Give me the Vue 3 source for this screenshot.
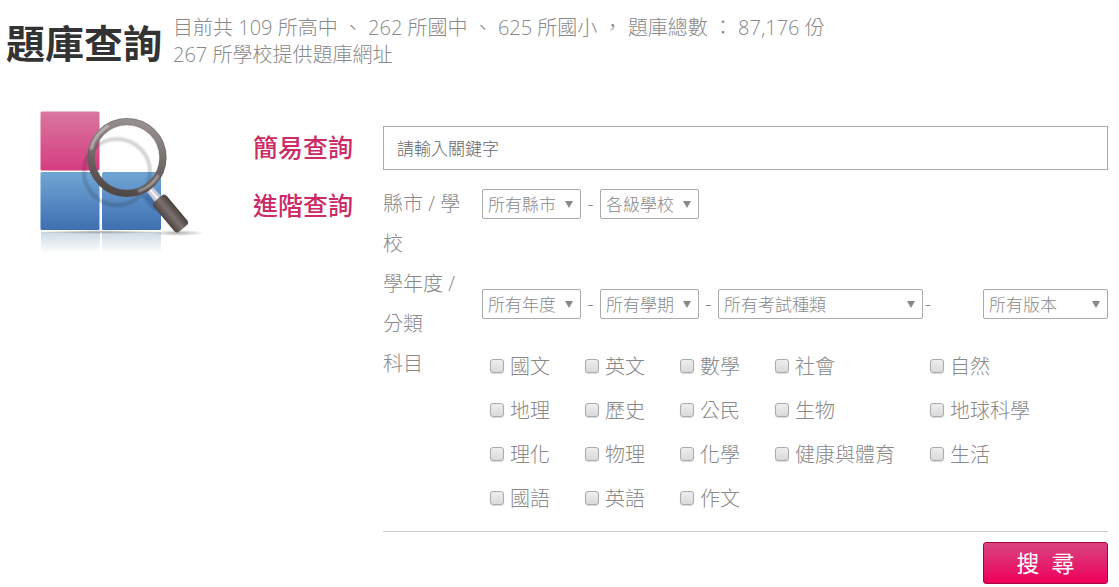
<template>
  <div class="view" lang="zh-Hant">
    <header class="head">
      <h1>題庫查詢</h1>
      <p>
        目前共 109 所高中 、 262 所國中 、 625 所國小 ， 題庫總數 ： 87,176 份<br />
        267 所學校提供題庫網址
      </p>
    </header>

    <form class="search" @submit.prevent="submit">
      <svg class="logo" viewBox="36 105 170 150" width="170" height="150" aria-hidden="true">
        <defs>
          <linearGradient id="pink" x1="0" y1="0" x2="0" y2="1">
            <stop offset="0" stop-color="#d9779f" />
            <stop offset="1" stop-color="#d53c80" />
          </linearGradient>
          <linearGradient id="blue" x1="0" y1="0" x2="0" y2="1">
            <stop offset="0" stop-color="#70a6d5" />
            <stop offset="1" stop-color="#3e6fb1" />
          </linearGradient>
          <linearGradient id="mirror" x1="0" y1="0" x2="0" y2="1">
            <stop offset="0" stop-color="#cbd9e3" />
            <stop offset="1" stop-color="#fff" />
          </linearGradient>
          <linearGradient id="ring" x1="0.6" y1="0" x2="0.4" y2="1">
            <stop offset="0" stop-color="#979090" />
            <stop offset="0.5" stop-color="#736a69" />
            <stop offset="1" stop-color="#514845" />
          </linearGradient>
          <linearGradient id="handle" x1="0" y1="0" x2="1" y2="0">
            <stop offset="0" stop-color="#4c4340" />
            <stop offset="0.5" stop-color="#7b7170" />
            <stop offset="1" stop-color="#483f3c" />
          </linearGradient>
          <radialGradient id="ground">
            <stop offset="0" stop-color="#777" stop-opacity="0.6" />
            <stop offset="1" stop-color="#777" stop-opacity="0" />
          </radialGradient>
          <filter id="soft"><feGaussianBlur stdDeviation="0.8" /></filter>
        </defs>

        <rect x="41" y="232" width="59" height="21" fill="url(#mirror)" />
        <rect x="102" y="232" width="59" height="21" fill="url(#mirror)" />
        <ellipse cx="100" cy="232" rx="62" ry="2" fill="url(#ground)" />
        <ellipse cx="178" cy="233" rx="26" ry="3" fill="url(#ground)" />

        <rect x="40.500" y="111.500" width="59" height="59" rx="1.500" fill="url(#pink)" />
        <rect x="40.500" y="172" width="59" height="58" rx="1.500" fill="url(#blue)" />
        <rect x="102" y="172" width="59" height="58" rx="1.500" fill="url(#blue)" />

        <g filter="url(#soft)">
          <circle cx="117" cy="172" r="33" fill="none" stroke="#222" stroke-opacity="0.25" stroke-width="3" />
          <path d="M141 196l14 15 6-2v-9l-10-8z" fill="#1d3f70" fill-opacity="0.35" />
        </g>

        <path d="M147 192l6-5 8 9-6 6z" fill="#c9c7d3" />
        <path d="M149 190l2-1 8 9-2 2z" fill="#f1f0f6" />
        <rect
          x="162" y="194" width="17" height="39" rx="4"
          fill="url(#handle)" transform="rotate(-40 170.500 213.500)"
        />

        <circle cx="127" cy="157.500" r="36" fill="none" stroke="url(#ring)" stroke-width="7" />
        <g fill="none" stroke="#fff" stroke-linecap="round" filter="url(#soft)">
          <path d="M91 149a37 37 0 0 1 17-23" stroke-opacity="0.7" stroke-width="2" />
          <path d="M139 191a37 37 0 0 0 19-15" stroke-opacity="0.6" stroke-width="2" />
        </g>
        <circle cx="127" cy="157.500" r="39" fill="none" stroke="#574e4b" stroke-opacity="0.3" />
        <circle cx="127" cy="157.500" r="32.500" fill="none" stroke="#574e4b" stroke-opacity="0.3" />
      </svg>

      <nav class="modes">
        <a href="#simple">簡易查詢</a>
        <a href="#advanced">進階查詢</a>
      </nav>

      <div class="fields">
        <input
          v-model="keyword" class="keyword" type="text"
          placeholder="請輸入關鍵字" aria-label="請輸入關鍵字"
        />

        <div v-for="row in rows" :key="row.label" class="row" :class="row.name">
          <label class="caption" :for="row.selects[0].name">{{ row.label }}</label>
          <div class="selects">
            <template v-for="(s, i) in row.selects" :key="s.name">
              <span v-if="i" class="dash">-</span>
              <span class="pick" :class="s.name">
                <select :id="s.name" :aria-label="s.text">
                  <option>{{ s.text }}</option>
                </select>
              </span>
            </template>
          </div>
        </div>

        <div class="row" role="group" aria-labelledby="subject-caption">
          <span id="subject-caption" class="caption">科目</span>
          <div class="subjects">
            <div v-for="(line, i) in subjects" :key="i" class="line">
              <label v-for="name in line" :key="name">
                <input v-model="checked" type="checkbox" :value="name" />{{ name }}
              </label>
            </div>
          </div>
        </div>

        <div class="actions">
          <button type="submit">搜&nbsp;&nbsp;尋</button>
        </div>
      </div>
    </form>
  </div>
</template>

<script setup>
import { ref } from 'vue';

const keyword = ref('');
const checked = ref([]);

const rows = [
  {
    name: 'place',
    label: '縣市 / 學校',
    selects: [
      { name: 'city', text: '所有縣市' },
      { name: 'school', text: '各級學校' },
    ],
  },
  {
    name: 'exam',
    label: '學年度 / 分類',
    selects: [
      { name: 'year', text: '所有年度' },
      { name: 'term', text: '所有學期' },
      { name: 'kind', text: '所有考試種類' },
      { name: 'version', text: '所有版本' },
    ],
  },
];

const subjects = [
  ['國文', '英文', '數學', '社會', '自然'],
  ['地理', '歷史', '公民', '生物', '地球科學'],
  ['理化', '物理', '化學', '健康與體育', '生活'],
  ['國語', '英語', '作文'],
];

const submit = () => {
  console.log(keyword.value, checked.value);
};
</script>

<style>
body {
  background: #fff;
}
</style>

<style scoped>
.view {
  padding: 0 11px 3px 6px;
  color: #888;
  font-family: "Open Sans", "Noto Sans CJK TC", sans-serif;
  font-size: 20px;
  font-weight: 300;
}

* {
  box-sizing: border-box;
}

input,
select,
button {
  margin: 0;
  font-family: inherit;
  font-weight: inherit;
}

.head {
  display: flex;
  gap: 11px;
  padding-top: 14px;
}

h1 {
  flex: none;
  margin: 0;
  color: #333;
  font-size: 39px;
  font-weight: 700;
  line-height: 58px;
}

.head p {
  margin: 0;
  line-height: 27px;
}

.search {
  display: grid;
  grid-template-columns: 170px 99px 1fr;
  align-items: start;
  padding: 54px 0 0 30px;
}

.logo {
  margin-top: -21px;
}

.modes {
  display: flex;
  flex-direction: column;
  gap: 16px;
  margin-left: 47px;
  width: 100px;
}

.modes a {
  color: #cc2b66;
  font-size: 25px;
  font-weight: 500;
  line-height: 42px;
  text-decoration: none;
  white-space: nowrap;
}

.fields {
  min-width: 0;
  margin-left: 78px;
}

.keyword {
  display: block;
  width: 100%;
  height: 44px;
  margin-bottom: 14px;
  padding: 0 13px;
  border: 1px solid #aaa;
  font-size: 17px;
}

.keyword::placeholder {
  color: #666;
}

.row {
  display: flex;
}

.caption {
  flex: none;
  width: 99px;
  padding-right: 12px;
  line-height: 40px;
}

.selects {
  display: flex;
  flex: 1;
  align-items: center;
}

.place .selects {
  align-items: flex-start;
  padding-top: 5px;
}

.dash {
  width: 19px;
  line-height: 30px;
  text-align: center;
}

.pick {
  position: relative;
  width: 99px;
}

.pick::after {
  content: "";
  position: absolute;
  top: 12px;
  right: 8px;
  border-top: 7px solid #888;
  border-left: 4px solid transparent;
  border-right: 4px solid transparent;
  pointer-events: none;
}

.kind {
  width: 205px;
}

.kind + .dash {
  width: 10px;
}

.version {
  width: 125px;
  margin-left: auto;
}

select {
  display: block;
  width: 100%;
  height: 30px;
  padding: 0 5px;
  border: 1px solid #aaa;
  border-radius: 2px;
  background: #fff;
  color: #888;
  font-size: 17px;
  appearance: none;
}

.subjects {
  flex: 1;
  padding: 1px 0 10px 8px;
}

.line {
  display: grid;
  grid-template-columns: 95px 95px 95px 155px 1fr;
}

.line label {
  display: flex;
  align-items: center;
  gap: 6px;
  line-height: 44px;
  white-space: nowrap;
}

.line input {
  width: 14px;
  height: 14px;
  margin-bottom: 3px;
  border: 1px solid #aaa;
  border-radius: 3px;
  background: linear-gradient(#eee, #dadada);
  box-shadow: 0 1px 1px #ddd;
  appearance: none;
}

.line input:checked {
  background: #cc2b66;
}

.actions {
  display: flex;
  justify-content: flex-end;
  padding-top: 10px;
  border-top: 1px solid #ccc;
}

.actions button {
  width: 125px;
  height: 42px;
  padding: 0;
  border: 1px solid #a8003f;
  border-radius: 3px;
  background: linear-gradient(#d84480, #ee005a);
  color: #fff;
  font-size: 23px;
  font-weight: 400;
  line-height: 38px;
  cursor: pointer;
}
</style>
